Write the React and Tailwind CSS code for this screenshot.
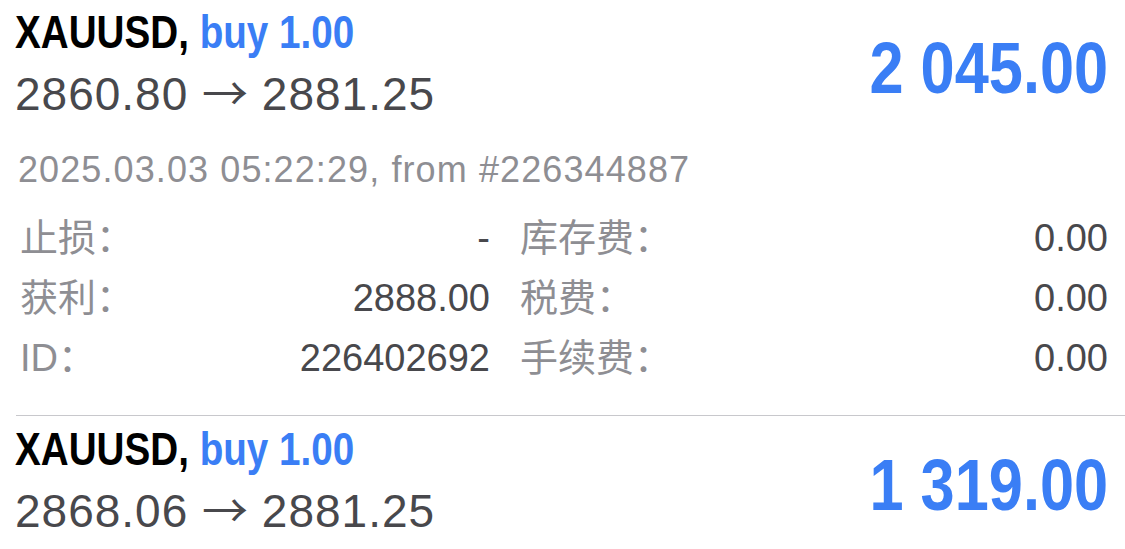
import React from "react";

const bold = "font-['Liberation_Sans',sans-serif] font-bold";
const sans = "font-['Liberation_Sans','Noto_Sans_CJK_SC',sans-serif]";

function Header({ from, to, profit }) {
  return (
    <div className="flex items-start justify-between pl-[15px] pr-[17px]">
      <div className="flex flex-col">
        <div className={`${bold} h-[54px] text-[46px] leading-[54px] text-black whitespace-nowrap`}>
          <span className="inline-block origin-left scale-x-[0.84]">
            XAUUSD, <span className="text-[#3a7ef5]">buy 1.00</span>
          </span>
        </div>
        <div className={`${sans} mt-[5px] h-[60px] text-[46px] leading-[60px] tracking-[1px] text-[#48484c] whitespace-nowrap`}>
          {from}{" "}
          <span className="font-['Noto_Sans_CJK_SC',sans-serif] leading-none tracking-normal">→</span>{" "}
          {to}
        </div>
      </div>
      <div className={`${bold} mt-[26px] h-[73px] text-[73px] leading-[73px] text-[#3a7ef5] whitespace-nowrap`}>
        <span className="inline-block origin-right scale-x-[0.84]">{profit}</span>
      </div>
    </div>
  );
}

function Row({ l1, v1, l2, v2 }) {
  return (
    <div className={`${sans} grid grid-cols-[470px_1fr] gap-x-[30px] h-[60px] text-[38px] leading-[60px]`}>
      <div className="flex justify-between">
        <span className="text-[#8e8e93]">{l1}</span>
        <span className="text-[#48484c]">{v1}</span>
      </div>
      <div className="flex justify-between">
        <span className="text-[#8e8e93]">{l2}</span>
        <span className="text-[#48484c]">{v2}</span>
      </div>
    </div>
  );
}

export default function App() {
  return (
    <div className="w-[1125px] h-[549px] overflow-hidden bg-white">
      <div className="pt-[5px]">
        <Header from="2860.80" to="2881.25" profit="2 045.00" />
        <div className={`${sans} mt-[24px] pl-[18px] text-[36px] leading-[44px] tracking-[1.1px] text-[#8e8e93] whitespace-nowrap`}>
          2025.03.03 05:22:29, from #226344887
        </div>
        <div className="mt-[16px] pl-[20px] pr-[17px]">
          <Row l1="止损：" v1="-" l2="库存费：" v2="0.00" />
          <Row l1="获利：" v1="2888.00" l2="税费：" v2="0.00" />
          <Row l1="ID：" v1="226402692" l2="手续费：" v2="0.00" />
        </div>
      </div>
      <div className="mt-[27px] ml-[16px] h-px bg-[#c8c8cc]" />
      <div className="pt-[6px]">
        <Header from="2868.06" to="2881.25" profit="1 319.00" />
      </div>
    </div>
  );
}
